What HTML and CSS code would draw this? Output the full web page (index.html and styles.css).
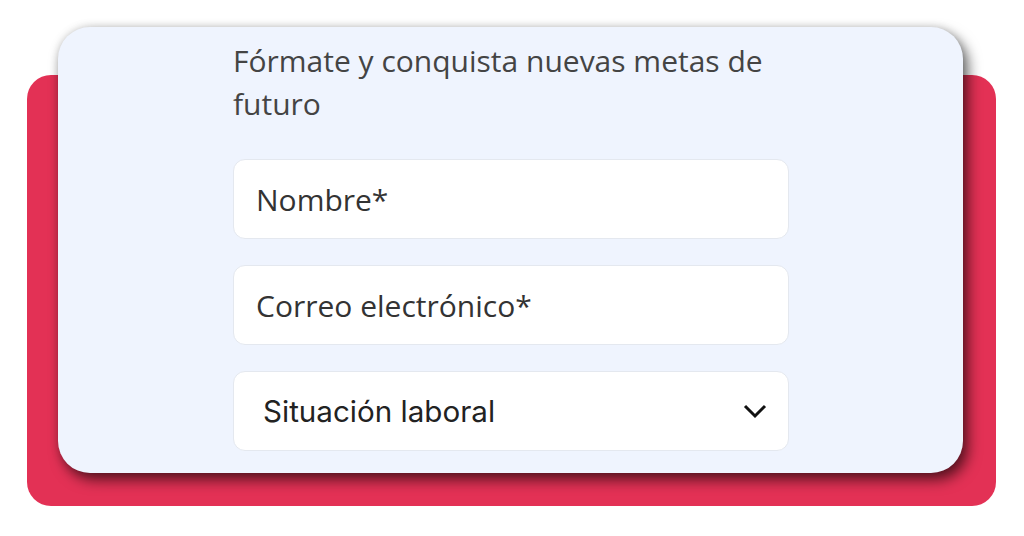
FILE: index.html
```html
<!DOCTYPE html>
<html lang="es">
<head>
<meta charset="utf-8">
<title>Fórmate</title>
<link rel="stylesheet" href="styles.css">
</head>
<body>
<div class="plate">
  <form class="card" action="/" method="post">
    <p class="lead">Fórmate y conquista nuevas metas de futuro</p>
    <input class="field" type="text" name="nombre" placeholder="Nombre*">
    <input class="field" type="email" name="email" placeholder="Correo electrónico*">
    <div class="select-wrap">
      <select class="field select" name="situacion">
        <option>Situación laboral</option>
      </select>
      <svg class="chevron" width="24" height="16" viewBox="0 0 24 16"><path d="M2 3 L12 13 L22 3" fill="none" stroke="#111" stroke-width="3"/></svg>
    </div>
  </form>
</div>
</body>
</html>
```

FILE: styles.css
```css
html, body { min-height: 536px; }
body { box-sizing: border-box; margin: 0; padding: 75px 0 0 27px; background: #fff; font-family: "Open Sans", "Noto Sans", sans-serif; }
.plate { display: flow-root; box-sizing: border-box; width: 969px; height: 431px; padding: 0 0 0 31px; border-radius: 24px; background: #e33155; }
.card { display: flex; flex-direction: column; gap: 26px; box-sizing: border-box; width: 905px; height: 446px; margin: -48px 0 0; padding: 12px 0 0 175px; border-radius: 32px; background: #eff4fe; box-shadow: 5px 7px 14px rgba(0, 0, 0, 0.6), 0 0 8px rgba(0, 0, 0, 0.15); }
.lead { width: 556px; margin: 0 0 8px; font-size: 30px; line-height: 43px; color: #444; }
.field { box-sizing: border-box; width: 556px; height: 80px; margin: 0; padding: 0 22px; border: 1px solid #e4e8ef; border-radius: 12px; background: #fff; font: 30px "Open Sans", sans-serif; color: #333; outline: none; }
.field::placeholder { color: #333; }
.select-wrap { position: relative; width: 556px; }
.select { appearance: none; padding-left: 29px; font-family: Inter, sans-serif; font-size: 29.6px; color: #222; }
.chevron { position: absolute; right: 22px; top: 32px; pointer-events: none; }
```
